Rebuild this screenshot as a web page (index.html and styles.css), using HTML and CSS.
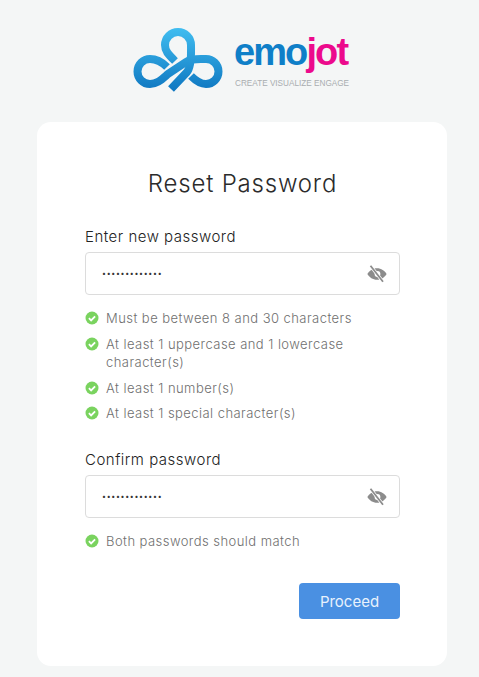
FILE: index.html
```html
<!DOCTYPE html>
<html lang="en">
<head>
  <meta charset="UTF-8">
  <meta name="viewport" content="width=device-width, initial-scale=1.0">
  <title>Reset Password</title>
  <link rel="stylesheet" href="styles.css">
</head>
<body>
  <svg width="0" height="0" class="defs">
    <defs>
      <linearGradient id="logoBlue" gradientUnits="userSpaceOnUse" x1="0" y1="28" x2="0" y2="92">
        <stop offset="0" stop-color="#40bdf0"/>
        <stop offset="1" stop-color="#0e76c0"/>
      </linearGradient>
      <symbol id="check" viewBox="0 0 14 14">
        <circle cx="7" cy="7" r="6.5" fill="#7ad35f"/>
        <path d="M3.9 7.2l2.2 2.2 4-4.1" fill="none" stroke="#fff" stroke-width="1.8"/>
      </symbol>
      <symbol id="eyeOff" viewBox="0 0 20 18">
        <path d="M10 3.2c4.2 0 7.700 2.500 9.600 5.800-1.900 3.300-5.400 5.800-9.600 5.800S2.300 12.300.4 9C2.300 5.700 5.800 3.200 10 3.200z" fill="#8c8c8c"/>
        <circle cx="10.500" cy="9" r="2.900" fill="#fff"/>
        <path d="M3.500 .8l12.500 16" stroke="#fff" stroke-width="3.200"/>
        <path d="M3.500 .8l12.500 16" stroke="#8c8c8c" stroke-width="1.800"/>
      </symbol>
    </defs>
  </svg>

  <header class="brand">
    <svg class="brand-mark" width="92" height="66" viewBox="132 27 92 66">
      <g fill="none" stroke="url(#logoBlue)" stroke-width="8">
        <path d="M171 89L187 72C192 66 191 52 191 45A13 13 0 0 0 165 45C165 51 168 54 175 61"/>
        <path d="M167 67C162 62 156 59 150 59A12.500 12.500 0 0 0 150 84C157 84 161 80 168 74L186 62C192 58 200 59 206 59A12.500 12.500 0 0 1 206 84C200 84 196 81 191 76"/>
      </g>
    </svg>
    <div class="brand-text">
      <div class="wordmark"><span class="emo">emo</span><span class="jot">jot</span></div>
      <div class="tagline">CREATE VISUALIZE ENGAGE</div>
    </div>
  </header>

  <main class="card">
    <h1>Reset Password</h1>

    <label class="field-label" for="newPassword">Enter new password</label>
    <div class="password-box">
      <input type="password" id="newPassword" value="aaaaaaaaaaaaa">
      <svg class="eye" width="20" height="18"><use href="#eyeOff"/></svg>
    </div>
    <ul class="rules">
      <li><svg width="14" height="14"><use href="#check"/></svg><span>Must be between 8 and 30 characters</span></li>
      <li><svg width="14" height="14"><use href="#check"/></svg><span>At least 1 uppercase and 1 lowercase character(s)</span></li>
      <li><svg width="14" height="14"><use href="#check"/></svg><span>At least 1 number(s)</span></li>
      <li><svg width="14" height="14"><use href="#check"/></svg><span>At least 1 special character(s)</span></li>
    </ul>

    <label class="field-label confirm" for="confirmPassword">Confirm password</label>
    <div class="password-box">
      <input type="password" id="confirmPassword" value="aaaaaaaaaaaaa">
      <svg class="eye" width="20" height="18"><use href="#eyeOff"/></svg>
    </div>
    <ul class="rules">
      <li><svg width="14" height="14"><use href="#check"/></svg><span>Both passwords should match</span></li>
    </ul>

    <div class="actions">
      <button type="button">Proceed</button>
    </div>
  </main>
</body>
</html>
```

FILE: styles.css
```css
body {
  margin: 0;
  background-color: #f4f6f6;
  font-family: Inter, "Open Sans", sans-serif;
  color: #3a3a3a;
}

.defs {
  position: absolute;
}

.brand {
  display: flex;
  justify-content: center;
  align-items: flex-start;
  gap: 10px;
  height: 122px;
  padding: 27px 0 0 3px;
  box-sizing: border-box;
}

.brand-text {
  width: 116px;
  padding-top: 3px;
}

.wordmark {
  font-family: "Liberation Sans", sans-serif;
  font-size: 38px;
  font-weight: 700;
  line-height: 44px;
  letter-spacing: -1.9px;
}

.emo {
  color: #0f7fc8;
}

.jot {
  color: #ec0a8c;
}

.tagline {
  margin: 5px 0 0 1px;
  font-family: "Liberation Sans", sans-serif;
  font-size: 8.2px;
  line-height: 10px;
  color: #a9adb0;
  white-space: nowrap;
}

.card {
  width: 410px;
  height: 544px;
  margin-left: 37px;
  padding: 47px 47px 0 48px;
  box-sizing: border-box;
  background-color: #fff;
  border-radius: 14px;
}

h1 {
  margin: 0 0 28px;
  font-size: 24px;
  font-weight: 300;
  line-height: 30px;
  letter-spacing: 0.8px;
  text-align: center;
  color: #2b2b2b;
}

.field-label {
  display: block;
  font-size: 15px;
  font-weight: 300;
  line-height: 20px;
  letter-spacing: 0.5px;
  color: #222;
}

.field-label.confirm {
  margin-top: 28px;
}

.password-box {
  display: flex;
  align-items: center;
  height: 43px;
  margin-top: 5px;
  padding: 0 12px 0 16px;
  box-sizing: border-box;
  border: 1px solid #dcdcdc;
  border-radius: 4px;
}

.password-box input {
  flex: 1;
  min-width: 0;
  border: none;
  outline: none;
  padding: 0;
  font-family: Inter, sans-serif;
  font-size: 7px;
  letter-spacing: 0.7px;
  color: #333;
}

.rules {
  list-style: none;
  margin: 14.200px 0 0;
  padding: 0;
  display: flex;
  flex-direction: column;
  gap: 7.7px;
}

.rules li {
  display: flex;
  gap: 7px;
  font-size: 13px;
  font-weight: 300;
  line-height: 18px;
  letter-spacing: 0.45px;
  color: #6f6f6f;
}

.rules svg {
  flex: none;
  margin-top: 2px;
}

.actions {
  display: flex;
  justify-content: flex-end;
  margin-top: 33px;
}

button {
  width: 101px;
  height: 36px;
  border: none;
  border-radius: 4px;
  background-color: #4a90e2;
  color: #e8f2fd;
  font-family: Inter, sans-serif;
  font-size: 15px;
}
```
